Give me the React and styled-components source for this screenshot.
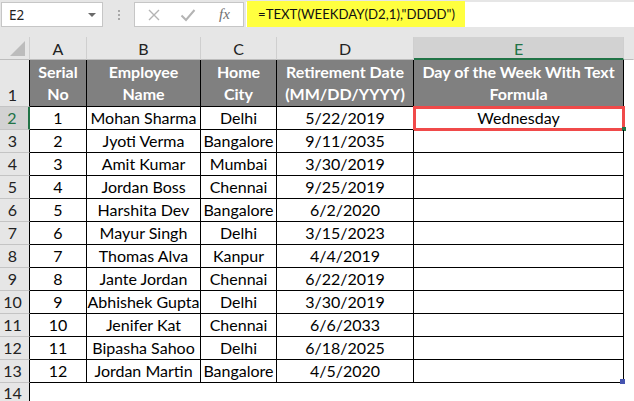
import React from "react";
import styled, { createGlobalStyle, css } from "styled-components";

const Global = createGlobalStyle`
  html, body { margin: 0; padding: 0; background: #ffffff; }
  body { width: 634px; height: 401px; overflow: hidden; }
  * { box-sizing: border-box; }
`;

const GREEN = "#217346";
const HDR_BG = "#e6e6e6";
const SEL_BG = "#d2d2d2";
const FONT = `Lato, "Noto Sans", sans-serif`;

const Sheet = styled.div`
  width: 634px;
  height: 401px;
  overflow: hidden;
  background: #fff;
  font-family: ${FONT};
`;

const Toolbar = styled.div`
  height: 37px;
  background: ${HDR_BG};
  display: flex;
  align-items: flex-start;
  padding: 2px 0 0 1px;
`;

const NameBox = styled.div`
  width: 102px;
  height: 25px;
  background: #fff;
  border: 1px solid #c6c6c6;
  display: flex;
  align-items: center;
  justify-content: space-between;
  padding: 0 6px 0 7px;
  font-family: "Noto Sans", sans-serif;
  font-size: 13.5px;
  color: #222;
`;

const Caret = styled.span`
  width: 0;
  height: 0;
  border-left: 4px solid transparent;
  border-right: 4px solid transparent;
  border-top: 4px solid #6a6a6a;
`;

const Dots = styled.div`
  width: 31px;
  height: 25px;
  display: flex;
  flex-direction: column;
  align-items: center;
  justify-content: center;
  gap: 2px;
  & > span {
    width: 2px;
    height: 2px;
    background: #a8a8a8;
  }
`;

const FxBox = styled.div`
  width: 110px;
  height: 25px;
  background: #fff;
  border: 1px solid #c6c6c6;
  display: flex;
  align-items: center;
  padding-left: 12px;
  gap: 19px;
`;

const FxText = styled.span`
  font-family: "Liberation Serif", serif;
  font-style: italic;
  font-size: 15px;
  color: #707070;
  margin-left: 4px;
`;

const FormulaInput = styled.div`
  flex: 1;
  height: 25px;
  background: #fff;
  margin-left: 2px;
  display: flex;
  align-items: stretch;
  padding-left: 1px;
`;

const Highlight = styled.span`
  background: #ffff3f;
  display: flex;
  align-items: center;
  padding: 0 10px 0 11px;
  font-size: 13.2px;
  color: #111;
  margin-top: -1px;
  height: 26px;
`;

const COLS = "30px 57px 114px 76px 137px 210px 1fr";

const Row = styled.div`
  display: grid;
  grid-template-columns: ${COLS};
  height: ${(p) => p.$h}px;
`;

const ColHead = styled.div`
  background: ${(p) => (p.$sel ? SEL_BG : HDR_BG)};
  color: ${(p) => (p.$sel ? GREEN : "#222")};
  border-right: 1px solid ${(p) => (p.$last ? HDR_BG : "#cfcfcf")};
  border-bottom: ${(p) => (p.$sel ? `2px solid ${GREEN}` : `1px solid #bdbdbd`)};
  display: flex;
  align-items: center;
  justify-content: center;
  font-size: 16px;
  padding-top: ${(p) => (p.$sel ? 1 : 0)}px;
`;

const Corner = styled.div`
  background: ${HDR_BG};
  border-right: 1px solid #cfcfcf;
  border-bottom: 1px solid #bdbdbd;
  display: flex;
  align-items: flex-end;
  justify-content: flex-end;
  padding: 0 4px 3px 0;
  & > span {
    width: 0;
    height: 0;
    border-left: 15px solid transparent;
    border-bottom: 15px solid #bcbcbc;
  }
`;

const RowHead = styled.div`
  background: ${(p) => (p.$sel ? SEL_BG : HDR_BG)};
  color: ${(p) => (p.$sel ? GREEN : "#222")};
  border-right: ${(p) => (p.$sel ? `2px solid ${GREEN}` : `1px solid #000`)};
  border-bottom: 1px solid #c4c4c4;
  display: flex;
  align-items: flex-end;
  justify-content: center;
  font-size: 16px;
  line-height: 22px;
  padding-right: 4px;
`;

const TailHead = styled(RowHead)`
  align-items: flex-start;
  line-height: 20px;
`;

const Cell = styled.div`
  position: relative;
  border-right: 1px solid #000;
  border-bottom: 1px solid #000;
  display: flex;
  align-items: flex-end;
  justify-content: center;
  text-align: center;
  font-size: 16px;
  line-height: 22px;
  color: #000;
  white-space: nowrap;
  ${(p) =>
    p.$head &&
    css`
      background: #808080;
      color: #fff;
      font-weight: 700;
      white-space: normal;
      flex-direction: column;
      justify-content: flex-end;
      align-items: center;
      padding-bottom: 1px;
    `}
  ${(p) =>
    p.$selected &&
    css`
      outline: 3px solid #f04a4a;
      outline-offset: -2px;
      &::after {
        content: "";
        position: absolute;
        right: -3px;
        bottom: -2px;
        width: 4px;
        height: 4px;
        background: ${GREEN};
      }
    `}
  ${(p) =>
    p.$handle &&
    css`
      &::after {
        content: "";
        position: absolute;
        right: -2px;
        bottom: -2px;
        width: 5px;
        height: 5px;
        background: #4554b0;
      }
    `}
`;

const Blank = styled.div``;

const data = [
  ["1", "Mohan Sharma", "Delhi", "5/22/2019"],
  ["2", "Jyoti Verma", "Bangalore", "9/11/2035"],
  ["3", "Amit Kumar", "Mumbai", "3/30/2019"],
  ["4", "Jordan Boss", "Chennai", "9/25/2019"],
  ["5", "Harshita Dev", "Bangalore", "6/2/2020"],
  ["6", "Mayur Singh", "Delhi", "3/15/2023"],
  ["7", "Thomas Alva", "Kanpur", "4/4/2019"],
  ["8", "Jante Jordan", "Chennai", "6/22/2019"],
  ["9", "Abhishek Gupta", "Delhi", "3/30/2019"],
  ["10", "Jenifer Kat", "Chennai", "6/6/2033"],
  ["11", "Bipasha Sahoo", "Delhi", "6/18/2025"],
  ["12", "Jordan Martin", "Bangalore", "4/5/2020"],
];

const CancelIcon = () => (
  <svg width="14" height="14" viewBox="0 0 14 14">
    <path d="M2 2 L12 12 M12 2 L2 12" stroke="#b4b4b4" strokeWidth="1.4" fill="none" />
  </svg>
);

const CheckIcon = () => (
  <svg width="16" height="14" viewBox="0 0 16 14">
    <path d="M1.5 7.5 L6 12 L14.5 2" stroke="#b4b4b4" strokeWidth="2" fill="none" />
  </svg>
);

export default function App() {
  return (
    <Sheet>
      <Global />
      <Toolbar>
        <NameBox>
          <span>E2</span>
          <Caret />
        </NameBox>
        <Dots>
          <span />
          <span />
          <span />
        </Dots>
        <FxBox>
          <CancelIcon />
          <CheckIcon />
          <FxText>fx</FxText>
        </FxBox>
        <FormulaInput>
          <Highlight>=TEXT(WEEKDAY(D2,1),"DDDD")</Highlight>
        </FormulaInput>
      </Toolbar>

      <Row $h={23}>
        <Corner>
          <span />
        </Corner>
        <ColHead>A</ColHead>
        <ColHead>B</ColHead>
        <ColHead>C</ColHead>
        <ColHead>D</ColHead>
        <ColHead $sel>E</ColHead>
        <ColHead $last />
      </Row>

      <Row $h={47}>
        <RowHead>1</RowHead>
        <Cell $head>
          <span>Serial</span>
          <span>No</span>
        </Cell>
        <Cell $head>
          <span>Employee</span>
          <span>Name</span>
        </Cell>
        <Cell $head>
          <span>Home</span>
          <span>City</span>
        </Cell>
        <Cell $head>
          <span>Retirement Date</span>
          <span>(MM/DD/YYYY)</span>
        </Cell>
        <Cell $head>
          <span>Day of the Week With Text</span>
          <span>Formula</span>
        </Cell>
        <Blank />
      </Row>

      {data.map((r, i) => (
        <Row key={i} $h={23}>
          <RowHead $sel={i === 0}>{i + 2}</RowHead>
          <Cell>{r[0]}</Cell>
          <Cell>{r[1]}</Cell>
          <Cell>{r[2]}</Cell>
          <Cell>{r[3]}</Cell>
          <Cell $selected={i === 0} $handle={i === data.length - 1}>
            {i === 0 ? "Wednesday" : ""}
          </Cell>
          <Blank />
        </Row>
      ))}

      <Row $h={18}>
        <TailHead>14</TailHead>
      </Row>
    </Sheet>
  );
}
